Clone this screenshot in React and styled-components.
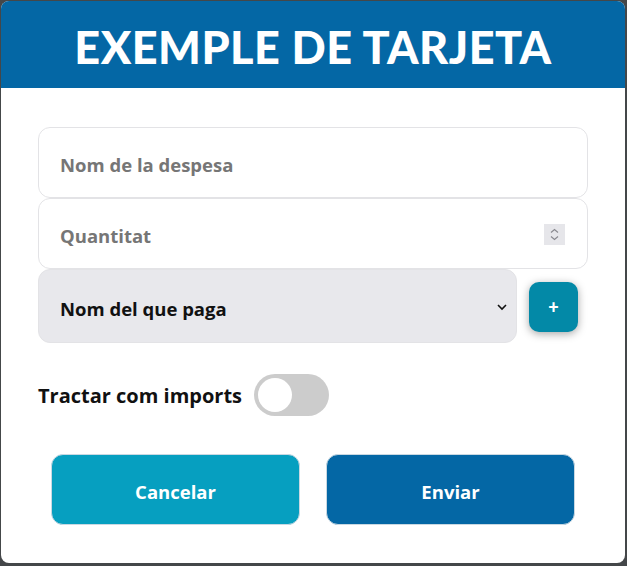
import React from 'react';
import styled, { createGlobalStyle } from 'styled-components';

const GlobalStyle = createGlobalStyle`
  html, body {
    margin: 0;
    padding: 0;
    background: #444749;
  }
  body {
    font-family: 'Open Sans', 'Noto Sans', sans-serif;
  }
`;

const Page = styled.div`
  padding: 1px 0 0 1px;
  width: 627px;
  height: 566px;
  box-sizing: border-box;
`;

const Card = styled.div`
  width: 624px;
  height: 562px;
  background: #ffffff;
  border-radius: 8px;
  overflow: hidden;
  display: flex;
  flex-direction: column;
`;

const Header = styled.header`
  height: 87px;
  flex: none;
  background: #0467a5;
  display: flex;
  align-items: center;
  justify-content: center;
`;

const Title = styled.h1`
  margin: 0;
  padding-top: 4px;
  color: #ffffff;
  font-family: 'Lato', sans-serif;
  font-weight: 900;
  font-size: 45px;
  letter-spacing: 0.5px;
`;

const Body = styled.div`
  padding: 39px 37px 0 37px;
  display: flex;
  flex-direction: column;
`;

const Field = styled.div`
  height: ${({ h }) => h || 71}px;
  flex: ${({ grow }) => (grow ? '1' : 'none')};
  box-sizing: border-box;
  border: 1px solid #e3e3e6;
  border-radius: 12px;
  background: ${({ filled }) => (filled ? '#e8e8ec' : '#ffffff')};
  display: flex;
  align-items: center;
  padding: 0 21px;
  font-size: 18.5px;
  font-weight: 700;
  color: ${({ filled }) => (filled ? '#111111' : '#767676')};
`;

const Label = styled.span`
  flex: 1;
  padding-top: 4px;
`;

const Spinner = styled.div`
  width: 21px;
  height: 21px;
  background: #e6e6ea;
  display: flex;
  align-items: center;
  justify-content: center;
  margin-right: 1px;
  margin-top: 2px;
`;

const SelectRow = styled.div`
  display: flex;
  align-items: center;
  gap: 12px;
`;

const AddButton = styled.button`
  width: 49px;
  height: 50px;
  flex: none;
  border: none;
  border-radius: 10px;
  background: #0389a7;
  color: #ffffff;
  font-family: 'Lato', sans-serif;
  font-weight: 900;
  font-size: 18px;
  box-shadow: 0 2px 8px rgba(0, 0, 0, 0.35);
  display: flex;
  align-items: center;
  justify-content: center;
  margin-right: 10px;
  margin-top: 2px;
`;

const ToggleRow = styled.div`
  display: flex;
  align-items: center;
  gap: 12px;
  margin-top: 31px;
  font-size: 20px;
  font-weight: 700;
  color: #111111;
`;

const Toggle = styled.div`
  width: 75px;
  height: 42px;
  border-radius: 21px;
  background: #cccccc;
  display: flex;
  align-items: center;
  padding: 0 4px;
  box-sizing: border-box;
`;

const Knob = styled.div`
  width: 34px;
  height: 34px;
  border-radius: 50%;
  background: #ffffff;
`;

const Actions = styled.div`
  display: flex;
  gap: 26px;
  padding: 0 13px;
  margin-top: 38px;
`;

const ActionButton = styled.button`
  width: 250px;
  height: 71px;
  padding-top: 4px;
  border: 1px solid #c9d8e2;
  border-radius: 12px;
  background: ${({ primary }) => (primary ? '#0467a5' : '#069fc0')};
  color: #ffffff;
  font-family: 'Open Sans', sans-serif;
  font-weight: 700;
  font-size: 18.5px;
`;

export default function App() {
  return (
    <Page>
      <GlobalStyle />
      <Card>
        <Header>
          <Title>EXEMPLE DE TARJETA</Title>
        </Header>
        <Body>
          <Field>
            <Label>Nom de la despesa</Label>
          </Field>
          <Field>
            <Label>Quantitat</Label>
            <Spinner>
              <svg width="11" height="15" viewBox="0 0 11 15" fill="none" stroke="#8a8a90" strokeWidth="1.2">
                <path d="M2 5.5 L5.5 2.5 L9 5.5" />
                <path d="M2 9.5 L5.5 12.5 L9 9.5" />
              </svg>
            </Spinner>
          </Field>
          <SelectRow>
            <Field h={74} grow filled>
              <Label>Nom del que paga</Label>
              <svg width="12" height="8" viewBox="0 0 12 8" fill="none" stroke="#111" strokeWidth="1.6" style={{ marginRight: -13, marginTop: 2 }}>
                <path d="M2 2 L6 6 L10 2" />
              </svg>
            </Field>
            <AddButton>+</AddButton>
          </SelectRow>
          <ToggleRow>
            <span>Tractar com imports</span>
            <Toggle>
              <Knob />
            </Toggle>
          </ToggleRow>
          <Actions>
            <ActionButton>Cancelar</ActionButton>
            <ActionButton primary>Enviar</ActionButton>
          </Actions>
        </Body>
      </Card>
    </Page>
  );
}
